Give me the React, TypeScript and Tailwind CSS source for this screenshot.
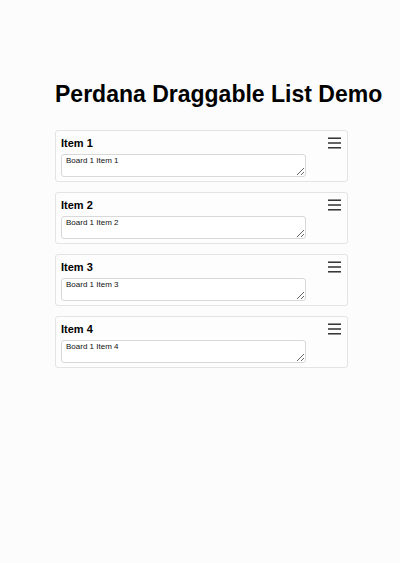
const items = [
  { id: 1, title: "Item 1", text: "Board 1 Item 1" },
  { id: 2, title: "Item 2", text: "Board 1 Item 2" },
  { id: 3, title: "Item 3", text: "Board 1 Item 3" },
  { id: 4, title: "Item 4", text: "Board 1 Item 4" },
];

function Handle() {
  return (
    <svg width="13" height="12" viewBox="0 0 13 12" className="block">
      <rect x="0" y="0.5" width="13" height="1.4" fill="#222" />
      <rect x="0" y="5.3" width="13" height="1.4" fill="#222" />
      <rect x="0" y="10.1" width="13" height="1.4" fill="#222" />
    </svg>
  );
}

export default function App() {
  return (
    <main className="min-h-[563px] w-full bg-[#fcfcfc] pl-[55px] pt-[80px] font-['Liberation_Sans',Arial,sans-serif] text-black">
      <h1 className="text-[23px] leading-[28px] font-bold whitespace-nowrap">
        Perdana Draggable List Demo
      </h1>
      <div className="mt-[22px] flex w-[293px] flex-col gap-[10px]">
        {items.map((item) => (
          <div
            key={item.id}
            className="rounded-[3px] border border-[#e4e4e4] bg-[#fdfdfd] pt-[5px] pb-[4px] pl-[5px] pr-[6px]"
          >
            <div className="flex items-center justify-between">
              <h3 className="text-[11px] leading-[14px] font-bold">{item.title}</h3>
              <Handle />
            </div>
            <textarea
              defaultValue={item.text}
              className="mt-[4px] block h-[23px] w-[245px] rounded-[3px] border border-[#d8d8d8] bg-white px-[4px] pt-[1px] text-[8px] leading-[10px] text-[#111] outline-none"
            />
          </div>
        ))}
      </div>
    </main>
  );
}
